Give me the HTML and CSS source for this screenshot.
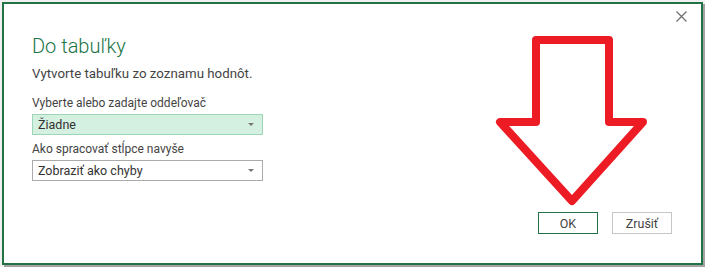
FILE: index.html
```html
<!DOCTYPE html>
<html lang="sk">
<head>
    <meta charset="UTF-8">
    <meta name="viewport" content="width=device-width, initial-scale=1.0">
    <title>Do tabuľky</title>
    <link rel="stylesheet" href="styles.css">
</head>
<body>
    <div class="dialog">
        <button class="close" type="button" aria-label="Zavrieť">
            <svg width="11" height="11" viewBox="0 0 11 11">
                <path d="M0.5 0.5 L10.5 10.5 M10.5 0.5 L0.5 10.5" stroke="#6f6f6f" stroke-width="1.2" fill="none"/>
            </svg>
        </button>

        <h1 class="title">Do tabuľky</h1>
        <p class="intro">Vytvorte tabuľku zo zoznamu hodnôt.</p>

        <label class="field-label">Vyberte alebo zadajte oddeľovač</label>
        <div class="select select-active">
            <span>Žiadne</span>
            <span class="caret"></span>
        </div>

        <label class="field-label">Ako spracovať stĺpce navyše</label>
        <div class="select">
            <span>Zobraziť ako chyby</span>
            <span class="caret"></span>
        </div>

        <div class="footer">
            <button class="btn btn-primary" type="button">OK</button>
            <button class="btn" type="button">Zrušiť</button>
        </div>

        <!-- annotation drawn over the dialog -->
        <svg class="arrow" width="705" height="267" viewBox="0 0 705 267">
            <path d="M536 40 L609 40 L609 122 L643 122 L572 201 L500 122 L536 122 Z"
                  fill="none" stroke="#ed1c24" stroke-width="8" stroke-linejoin="round"/>
        </svg>
    </div>
</body>
</html>
```

FILE: styles.css
```css
body {
    margin: 0;
    background-color: #f0f0f0;
    font-family: Roboto, 'Open Sans', sans-serif;
    color: #444;
}

.dialog {
    position: relative;
    box-sizing: border-box;
    width: 701px;
    height: 263px;
    margin: 2px;
    padding: 0 29px 29px 28px;
    background-color: #fff;
    border: 2px solid #217346;
    box-shadow: 2px 2px 0 #a3a3a3;
    display: flex;
    flex-direction: column;
    align-items: flex-start;
}

.close {
    position: absolute;
    top: 7px;
    right: 14px;
    padding: 0;
    border: none;
    background: none;
    line-height: 0;
}

.title {
    margin: 29px 0 0 0;
    font-size: 20px;
    font-weight: 300;
    line-height: 26px;
    color: #217346;
}

.intro {
    margin: 6px 0 0 0;
    font-size: 13.3px;
    line-height: 18px;
    color: #444;
}

.field-label {
    margin-top: 12px;
    font-size: 12px;
    line-height: 17px;
    color: #444;
}

.select-active + .field-label {
    margin-top: 6px;
}

.select {
    box-sizing: border-box;
    width: 231px;
    height: 21px;
    margin-top: 2px;
    padding: 0 8px 0 5px;
    border: 1px solid #ababab;
    background-color: #fff;
    display: flex;
    align-items: center;
    justify-content: space-between;
    font-size: 12.5px;
    color: #333;
}

.select-active {
    background-color: #d3f0e0;
    border-color: #9fd5b7;
}

.caret {
    width: 0;
    height: 0;
    border-left: 3px solid transparent;
    border-right: 3px solid transparent;
    border-top: 3px solid #777;
}

.footer {
    margin-top: auto;
    align-self: flex-end;
    display: flex;
    gap: 14px;
}

.btn {
    box-sizing: border-box;
    width: 60px;
    height: 22px;
    padding: 0;
    border: 1px solid #c6c6c6;
    background-color: #fff;
    font-family: Roboto, 'Open Sans', sans-serif;
    font-size: 12.5px;
    color: #444;
}

.btn-primary {
    border-color: #217346;
}

.arrow {
    position: absolute;
    top: -4px;
    left: -4px;
    pointer-events: none;
}
```
